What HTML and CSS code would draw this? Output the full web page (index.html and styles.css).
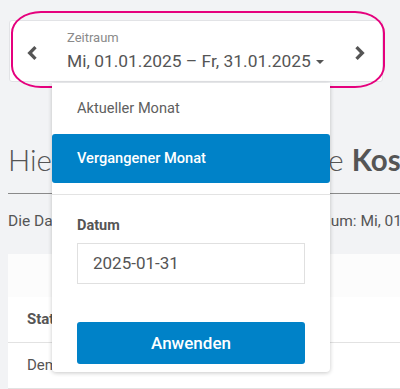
FILE: index.html
```html
<html lang="de">
  <head>
    <meta charset="UTF-8" />
    <title>Kostenübersicht</title>
    <link rel="stylesheet" href="styles.css">
  </head>
  <body>
    <div class="picker">
      <button class="nav-btn">
        <svg width="12" height="14" viewBox="0 0 12 14"><path d="M9.5 1.2 L3.7 7 L9.5 12.8" fill="none" stroke="#555" stroke-width="3.3"/></svg>
      </button>
      <div class="range">
        <span class="range-label">Zeitraum</span>
        <span class="range-value">Mi, 01.01.2025 – Fr, 31.01.2025 <span class="caret"></span></span>
      </div>
      <button class="nav-btn">
        <svg width="12" height="14" viewBox="0 0 12 14"><path d="M2.5 1.2 L8.3 7 L2.5 12.8" fill="none" stroke="#555" stroke-width="3.3"/></svg>
      </button>

      <div class="dropdown">
        <div class="dropdown-item">Aktueller Monat</div>
        <div class="dropdown-item active">Vergangener Monat</div>
        <div class="dropdown-divider"></div>
        <div class="dropdown-form">
          <label class="form-label">Datum</label>
          <div class="date-input">2025-01-31</div>
          <button class="apply-btn">Anwenden</button>
        </div>
      </div>

      <div class="highlight"></div>
    </div>

    <div class="content">
      <h1>Hier sehen Sie die aktuelle <strong>Kosten</strong></h1>
      <p class="info">Die Daten beziehen sich auf den gültigen Zeitraum: Mi, 01.01.2025 – Fr, 31.01.2025</p>

      <div class="card">
        <div class="card-top"></div>
        <div class="row head">Status</div>
        <div class="row">Dem</div>
      </div>
    </div>
  </body>
</html>
```

FILE: styles.css
```css
body {
  background-color: #f2f3f5;
  color: #555;
  font-family: Roboto, "Noto Sans", sans-serif;
  margin: 0;
  overflow: hidden;
}

.picker {
  position: relative;
  display: flex;
  align-items: center;
  margin: 20px 17px 0 9px;
  height: 62px;
  background-color: #fff;
  border: 1px solid #e2e3e6;
  border-radius: 3px;
  box-sizing: border-box;
}

.nav-btn {
  background: none;
  border: none;
  padding: 0;
  width: 44px;
  height: 40px;
  display: flex;
  align-items: center;
  justify-content: center;
  margin-top: 4px;
}

.range {
  flex: 1;
  display: flex;
  flex-direction: column;
  padding-left: 13px;
}

.range-label {
  font-size: 13px;
  color: #8a8a8a;
  line-height: 16px;
}

.range-value {
  font-size: 17.4px;
  color: #555;
  line-height: 24px;
  margin-top: 3px;
}

.caret {
  display: inline-block;
  width: 0;
  height: 0;
  border-left: 4.5px solid transparent;
  border-right: 4.5px solid transparent;
  border-top: 4.5px solid #555;
  vertical-align: middle;
  margin-left: 1px;
}

.highlight {
  position: absolute;
  left: 1px;
  top: -10px;
  width: 374px;
  height: 77px;
  border: 2.5px solid #e5007d;
  border-radius: 30px / 22px;
  box-sizing: border-box;
  pointer-events: none;
}

.dropdown {
  position: absolute;
  left: 42px;
  top: 62px;
  width: 278px;
  height: 289px;
  background-color: #fff;
  border-radius: 0 0 4px 4px;
  box-shadow: 0 1px 4px rgba(0, 0, 0, 0.22);
  z-index: 10;
}

.dropdown-item {
  height: 51px;
  line-height: 51px;
  padding-left: 25px;
  font-size: 14.6px;
  color: #606060;
}

.dropdown-item.active {
  height: 49px;
  line-height: 49px;
  background-color: #0082c8;
  color: #fff;
  font-weight: 500;
  border-radius: 3px;
}

.dropdown-divider {
  height: 1px;
  background-color: #e3e3e3;
  margin-top: 11px;
}

.dropdown-form {
  padding: 22px 25px 0;
}

.form-label {
  display: block;
  font-size: 14.5px;
  font-weight: 700;
  color: #555;
  line-height: 17px;
}

.date-input {
  margin-top: 9px;
  height: 41px;
  border: 1px solid #e0e0e0;
  box-sizing: border-box;
  padding-left: 15px;
  line-height: 39px;
  font-size: 17px;
  color: #555;
}

.apply-btn {
  display: block;
  width: 100%;
  margin-top: 38px;
  height: 42px;
  border: none;
  border-radius: 3px;
  background-color: #0082c8;
  color: #fff;
  font-family: Roboto, "Noto Sans", sans-serif;
  font-size: 17px;
  font-weight: 500;
}

.content {
  padding-left: 8px;
}

h1 {
  margin: 60px 0 0;
  padding-bottom: 15px;
  border-bottom: 1px solid #8a8a8a;
  font-family: Lato, "Open Sans", sans-serif;
  font-weight: 300;
  font-size: 29.5px;
  color: #555;
  white-space: nowrap;
  overflow: hidden;
  line-height: 36px;
}

h1 strong {
  font-weight: 700;
}

.info {
  margin: 18px 0 0;
  font-size: 15.5px;
  white-space: nowrap;
  overflow: hidden;
}

.card {
  margin-top: 24px;
  background-color: #fff;
}

.card-top {
  height: 43px;
  background-color: #fcfcfc;
}

.row {
  padding-left: 19px;
  height: 45px;
  line-height: 45px;
  border-bottom: 1px solid #e2e2e2;
  font-size: 15px;
}

.row.head {
  font-weight: 700;
}
```
